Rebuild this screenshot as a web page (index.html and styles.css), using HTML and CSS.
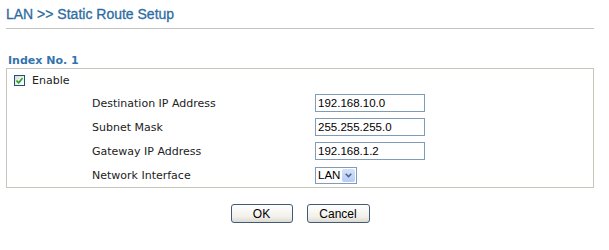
FILE: index.html
```html
<!DOCTYPE html>
<html lang="en">

<head>
    <meta charset="UTF-8">
    <title>LAN &gt;&gt; Static Route Setup</title>
    <link rel="stylesheet" href="styles.css">
</head>

<body>
    <div class="page">
        <h1 class="title">LAN &gt;&gt; Static Route Setup</h1>

        <div class="section-head">Index No. 1</div>
        <div class="box">
            <!-- enable switch -->
            <label class="enable-row">
                <span class="check">
                    <svg width="7" height="7" viewBox="0 0 7 7"><path d="M0.5 3.5 L2.7 5.7 L6.5 1.2" fill="none" stroke="#21a121" stroke-width="1.6"/></svg>
                </span>
                <span>Enable</span>
            </label>

            <div class="field-row">
                <span class="label">Destination IP Address</span>
                <input class="text-input" type="text" value="192.168.10.0">
            </div>
            <div class="field-row">
                <span class="label">Subnet Mask</span>
                <input class="text-input" type="text" value="255.255.255.0">
            </div>
            <div class="field-row">
                <span class="label">Gateway IP Address</span>
                <input class="text-input" type="text" value="192.168.1.2">
            </div>
            <div class="field-row">
                <span class="label">Network Interface</span>
                <div class="select">
                    <span class="select-value">LAN</span>
                    <span class="select-arrow">
                        <svg width="7" height="5" viewBox="0 0 7 5"><path d="M0.7 0.8 L3.5 3.6 L6.3 0.8" fill="none" stroke="#4d6185" stroke-width="1.5"/></svg>
                    </span>
                </div>
            </div>
        </div>

        <div class="buttons">
            <button class="btn btn-ok">OK</button>
            <button class="btn btn-cancel">Cancel</button>
        </div>
    </div>
</body>
</html>
```

FILE: styles.css
```css
body {
    margin: 0;
    background-color: #fff;
    color: #333;
    font-family: "DejaVu Sans", Verdana, sans-serif;
}

.page {
    width: 588px;
    margin-left: 6px;
    padding-top: 6px;
}

.title {
    margin: 0;
    padding-bottom: 6px;
    border-bottom: 1px solid #c4c4bc;
    font-family: "Liberation Sans", Arial, sans-serif;
    font-size: 14px;
    line-height: 16px;
    font-weight: normal;
    color: #2d6ca3;
    -webkit-text-stroke: 0.3px #2d6ca3;
}

.section-head {
    margin-top: 25px;
    margin-bottom: 1px;
    padding-left: 2px;
    font-size: 11px;
    line-height: 13px;
    font-weight: bold;
    color: #3574ad;
}

/* 设置框 */
.box {
    border: 1px solid #c6c6bd;
    font-size: 11px;
    color: #222;
}

.enable-row {
    display: flex;
    align-items: center;
    gap: 7px;
    height: 22px;
    padding-left: 7px;
}

.check {
    display: flex;
    align-items: center;
    justify-content: center;
    width: 9px;
    height: 9px;
    border: 1px solid #1c5180;
    background: linear-gradient(135deg, #dcdcd6, #fff);
}

.field-row {
    display: grid;
    grid-template-columns: 223px 110px;
    align-items: center;
    height: 24px;
    padding-left: 85px;
}

.text-input {
    box-sizing: border-box;
    width: 110px;
    height: 18px;
    margin: 0;
    padding: 0 2px;
    border: 1px solid #7f9db9;
    font-family: "Liberation Sans", Arial, sans-serif;
    font-size: 11.5px;
    color: #000;
}

.select {
    box-sizing: border-box;
    display: flex;
    align-items: center;
    width: 42px;
    height: 17px;
    border: 1px solid #7f9db9;
    font-family: "Liberation Sans", Arial, sans-serif;
    font-size: 11.5px;
    color: #000;
}

.select-value {
    flex: 1;
    padding-left: 2px;
}

.select-arrow {
    display: flex;
    align-items: center;
    justify-content: center;
    width: 13px;
    height: 13px;
    margin-right: 1px;
    background: linear-gradient(#d4e1fb, #b7cbf5);
    border-radius: 2px;
}

.buttons {
    display: flex;
    justify-content: center;
    gap: 14px;
    margin-top: 16px;
}

.btn {
    box-sizing: border-box;
    height: 19px;
    padding: 0;
    border: 1px solid #425a78;
    border-radius: 3px;
    background: linear-gradient(#fff, #f1f0ea 70%, #dcdad0);
    font-family: "Liberation Sans", Arial, sans-serif;
    font-size: 12px;
    color: #000;
}

.btn-ok {
    width: 62px;
}

.btn-cancel {
    width: 63px;
}
```
